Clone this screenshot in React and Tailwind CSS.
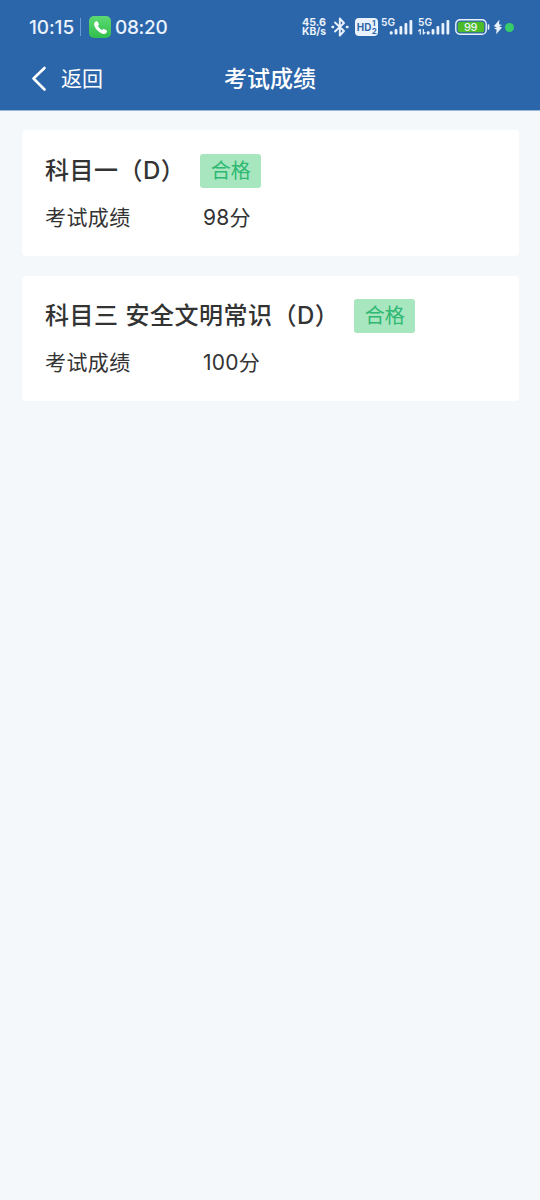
const results = [
  { name: '科目一（D）', score: '98分', height: 'h-[126px]', top: 'pt-[24px]' },
  { name: '科目三 安全文明常识（D）', score: '100分', height: 'h-[125px]', top: 'pt-[23px]' },
];

function Signal({ data }) {
  return (
    <svg width="33" height="20" viewBox="0 0 33 20" fill="#eaf2fd" className="shrink-0">
      <text x="0" y="8.6" fontSize="10.8" fontWeight="600" textLength="14" lengthAdjust="spacingAndGlyphs">5G</text>
      {data && (
        <path d="M2.3 12v5.500M.3 14.300l2-2M5.300 12v5.500M7.300 15.200l-2 2" stroke="#eaf2fd" strokeWidth="1.200" fill="none" />
      )}
      <rect x="8.800" y="14.300" width="2.800" height="3.200" rx="1" />
      <rect x="13.600" y="12" width="2.800" height="5.500" rx="1" />
      <rect x="18.500" y="9" width="2.800" height="8.500" rx="1" />
      <rect x="23.500" y="6" width="2.800" height="11.500" rx="1" />
      <rect x="28.500" y="3" width="2.800" height="14.500" rx="1" />
    </svg>
  );
}

function StatusBar() {
  return (
    <div className="flex h-[54px] items-center pl-[29px] text-[#eaf2fd]">
      <span className="w-[45px] whitespace-nowrap text-[19px] leading-none font-medium tracking-[-0.1px]">10:15</span>
      <span className="ml-[6px] h-[18px] w-px bg-[#6c9ad2]" />
      <span className="ml-[8px] flex size-[22px] items-center justify-center rounded-[5px] bg-linear-to-b from-[#5cda72] to-[#30bf4d]">
        <svg width="15" height="15" viewBox="0 0 15 15" fill="#fff">
          <path d="M2 1.900C3 .8 4.200 1 4.900 2.100l.8 1.600c.4.8 0 1.500-.8 2.100.7 1.800 2.400 3.500 4.200 4.200.7-.9 1.500-1.200 2.300-.8l1.700.9c1.100.6 1.200 1.900.2 2.800-1.300 1.200-3 1.300-5 .3C5.500 11.800 3.100 9.400 1.800 6.800.9 4.900.9 3.100 2 1.900z" />
        </svg>
      </span>
      <span className="ml-[4px] w-[52px] whitespace-nowrap text-[19px] leading-none font-medium tracking-[-0.3px]">08:20</span>
      <svg width="26" height="22" viewBox="0 0 26 22" fill="#eaf2fd" className="ml-[134px] shrink-0 font-bold">
        <text x="1" y="9.500" fontSize="11" textLength="24" lengthAdjust="spacingAndGlyphs">45.6</text>
        <text x="1" y="19" fontSize="10.300" textLength="24" lengthAdjust="spacingAndGlyphs">KB/s</text>
      </svg>
      <svg width="18" height="20" viewBox="0 0 18 20" fill="none" stroke="#eaf2fd" strokeWidth="1.900" strokeLinejoin="round" strokeLinecap="round" className="ml-[4px] shrink-0">
        <path d="M4 5.500l9 8.500-4.200 4.500V1.500L13 6l-9 8.500" />
        <path d="M1.500 10h.6M15.900 10h.6" strokeWidth="2.400" />
      </svg>
      <svg width="23" height="18" viewBox="0 0 23 18" className="ml-[6px] shrink-0 font-bold">
        <rect width="23" height="18" rx="4" fill="#eaf2fd" />
        <g fill="#2c66aa">
          <text x="1.800" y="12.800" fontSize="10.500" textLength="14.500" lengthAdjust="spacingAndGlyphs">HD</text>
          <text x="17" y="8.300" fontSize="8">1</text>
          <text x="16.700" y="16" fontSize="8">2</text>
        </g>
      </svg>
      <span className="ml-[3px] flex gap-[4px]">
        <Signal />
        <Signal data />
      </span>
      <svg width="36" height="16" viewBox="0 0 36 16" className="ml-[4px] shrink-0 font-medium">
        <rect x=".8" y=".8" width="30.400" height="14.400" rx="4.300" fill="none" stroke="#eaf2fd" strokeWidth="1.400" />
        <rect x="2.800" y="2.800" width="26.400" height="10.400" rx="2.500" fill="#4dbb29" />
        <text x="9" y="12" fontSize="11" fill="#eaf2fd" textLength="13.500">99</text>
        <path d="M33.500 6v4" stroke="#eaf2fd" strokeWidth="1.600" strokeLinecap="round" />
      </svg>
      <svg width="10" height="16" viewBox="0 0 10 16" fill="#eaf2fd" className="ml-[2px] shrink-0">
        <path d="M6.400.8L.8 7.300l3.100 1-2.900 1.300 2.600.9L3.200 15.200 9 8.600 6 7.600l3-1.500-3-.9z" />
      </svg>
      <span className="ml-[2px] size-[9px] shrink-0 rounded-full bg-[#36ce6b]" />
    </div>
  );
}

function ResultCard({ name, score, height, top }) {
  return (
    <section className={`${height} ${top} rounded-[4px] bg-white pl-[23px] text-[#333]`}>
      <div className="flex h-[34px] items-center">
        <h2 className="whitespace-nowrap text-[24px] leading-[34px] tracking-[0.5px] font-medium">{name}</h2>
        <span className="ml-[15px] h-[34px] w-[61px] rounded-[3px] bg-[#a8e6bf] text-center text-[20px] leading-[34px] text-[#2eb872]">合格</span>
      </div>
      <div className="mt-[13px] flex h-[34px] items-center text-[21px] leading-[34px] tracking-[0.4px]">
        <span className="w-[158px]">考试成绩</span>
        <span className="tracking-[0.2px]">{score}</span>
      </div>
    </section>
  );
}

export default function App() {
  return (
    <div lang="zh-CN" className="min-h-[1200px] w-full bg-[#f4f8fa] font-[Inter,'Noto_Sans_CJK_SC',sans-serif]">
      <header className="h-[111px] border-b border-[#9bb8d8] bg-[#2c66aa]">
        <StatusBar />
        <div className="grid h-[50px] grid-cols-[180px_180px_180px] items-center text-white">
          <button className="flex items-center pl-[31px] text-[21px] leading-[34px]">
            <svg width="17" height="26" viewBox="0 0 17 26" fill="none" stroke="currentColor" strokeWidth="2.600" strokeLinecap="round" strokeLinejoin="round">
              <path d="M13.500 2L2.500 12.500l11 11" />
            </svg>
            <span className="ml-[13px]">返回</span>
          </button>
          <h1 className="text-center text-[23px] font-medium leading-[34px]">考试成绩</h1>
        </div>
      </header>
      <main className="flex flex-col gap-[20px] pl-[22px] pr-[21px] pt-[19px]">
        {results.map((result) => (
          <ResultCard key={result.name} {...result} />
        ))}
      </main>
    </div>
  );
}
